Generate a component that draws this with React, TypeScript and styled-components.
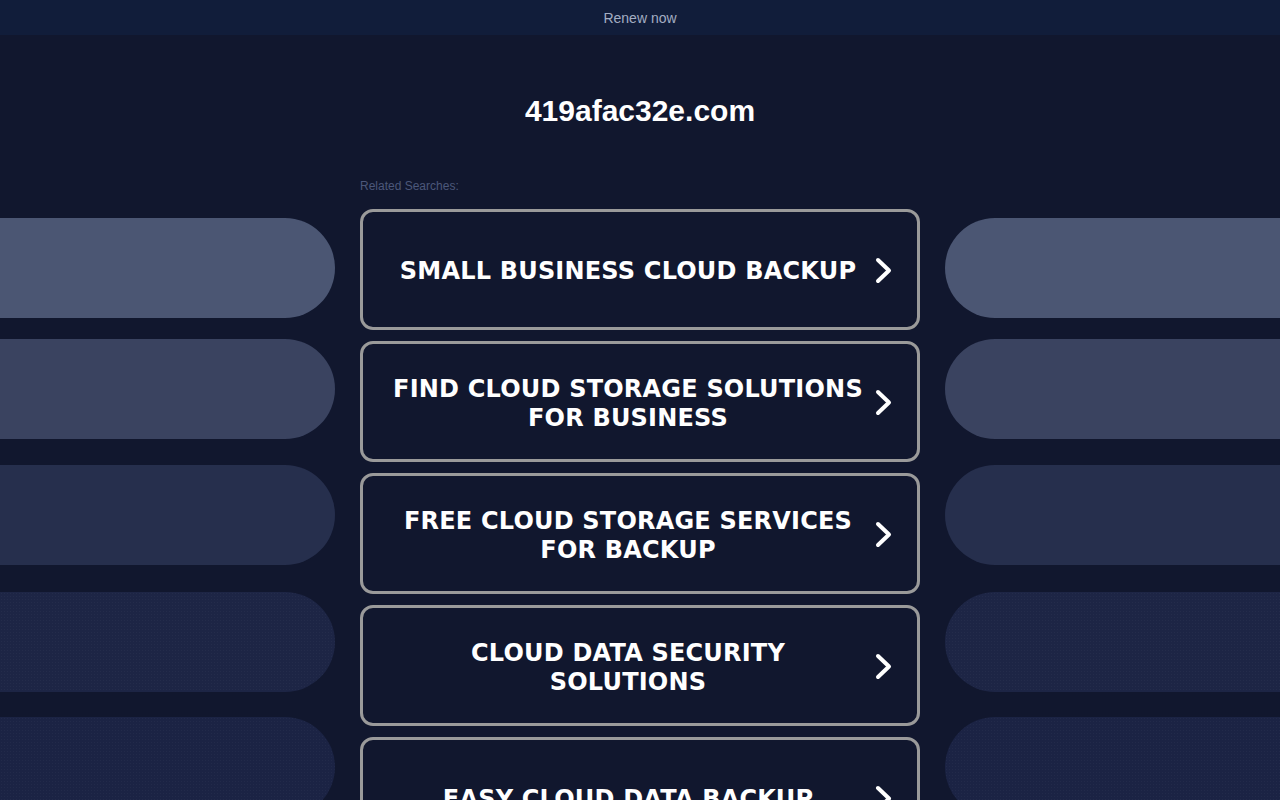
import React from "react";
import styled, { createGlobalStyle, css } from "styled-components";

const GlobalStyle = createGlobalStyle`
  html, body {
    margin: 0;
    padding: 0;
    background: #11172e;
    overflow: hidden;
  }
  * { box-sizing: border-box; }
`;

const Page = styled.div`
  width: 1280px;
  height: 800px;
  overflow: hidden;
  background: #11172e;
  font-family: "Liberation Sans", Arial, sans-serif;
`;

const TopBar = styled.div`
  height: 35px;
  background: #111d3a;
  display: flex;
  align-items: center;
  justify-content: center;
`;

const RenewLink = styled.a`
  color: #a3adc2;
  font-size: 14px;
  text-decoration: none;
  line-height: 16px;
  margin-top: 1px;
`;

const Title = styled.h1`
  margin: 58px 0 0;
  height: 36px;
  line-height: 36px;
  text-align: center;
  color: #ffffff;
  font-size: 30px;
  font-weight: 700;
  font-family: "Liberation Sans", Arial, sans-serif;
`;

const Main = styled.div`
  display: grid;
  grid-template-columns: 1fr 560px 1fr;
  column-gap: 25px;
  margin-top: 49px;
`;

const SideColumn = styled.div`
  display: flex;
  flex-direction: column;
  padding-top: 40px;
`;

const Pill = styled.div<{ $side: "left" | "right"; $color: string; $gap: number; $dots: boolean }>`
  height: 100px;
  flex: none;
  margin-top: ${(p) => p.$gap}px;
  background-color: ${(p) => p.$color};
  ${(p) =>
    p.$dots &&
    css`
      background-image: radial-gradient(rgba(255, 255, 255, 0.03) 0.6px, transparent 0.8px);
      background-size: 3px 3px;
    `}
  border-radius: ${(p) => (p.$side === "left" ? "0 50px 50px 0" : "50px 0 0 50px")};
`;

const Center = styled.div`
  display: flex;
  flex-direction: column;
`;

const RelatedLabel = styled.div`
  color: #4c577a;
  font-size: 12px;
  line-height: 14px;
  height: 14px;
  padding-top: 1px;
  margin-bottom: 17px;
`;

const ButtonList = styled.div`
  display: flex;
  flex-direction: column;
  gap: 11px;
`;

const SearchButton = styled.a`
  display: flex;
  align-items: center;
  min-height: 121px;
  padding: 0 25px 0 27px;
  border: 3px solid #9a9a9a;
  border-radius: 13px;
  background: #11172e;
  text-decoration: none;
  cursor: pointer;
`;

const ButtonText = styled.span`
  width: 476px;
  flex: none;
  padding-top: 4px;
  text-align: center;
  color: #ffffff;
  font-family: "DejaVu Sans", Verdana, Tahoma, sans-serif;
  font-weight: 700;
  font-size: 24px;
  line-height: 29px;
  letter-spacing: 0.2px;
  text-transform: uppercase;
`;

const Chevron = styled.svg`
  flex: none;
  width: 28px;
  height: 28px;
  margin-left: auto;
`;

const pills = [
  { color: "#4b5673", gap: 0, dots: false },
  { color: "#3a4360", gap: 21, dots: false },
  { color: "#262f4d", gap: 26, dots: false },
  { color: "#1d2545", gap: 27, dots: true },
  { color: "#1b2344", gap: 25, dots: true },
];

const searches = [
  "Small Business Cloud Backup",
  "Find Cloud Storage Solutions for Business",
  "Free Cloud Storage Services for Backup",
  "Cloud Data Security Solutions",
  "Easy Cloud Data Backup",
];

const ChevronIcon = () => (
  <Chevron viewBox="0 0 28 28" aria-hidden="true">
    <path
      d="M12 4 L23 14.5 L12 25"
      fill="none"
      stroke="#ffffff"
      strokeWidth="4"
      strokeLinecap="round"
      strokeLinejoin="round"
    />
  </Chevron>
);

export default function App() {
  return (
    <Page>
      <GlobalStyle />
      <TopBar>
        <RenewLink href="#">Renew now</RenewLink>
      </TopBar>
      <Title>419afac32e.com</Title>
      <Main>
        <SideColumn>
          {pills.map((p, i) => (
            <Pill key={i} $side="left" $color={p.color} $gap={p.gap} $dots={p.dots} />
          ))}
        </SideColumn>
        <Center>
          <RelatedLabel>Related Searches:</RelatedLabel>
          <ButtonList>
            {searches.map((s) => (
              <SearchButton key={s} href="#">
                <ButtonText>{s}</ButtonText>
                <ChevronIcon />
              </SearchButton>
            ))}
          </ButtonList>
        </Center>
        <SideColumn>
          {pills.map((p, i) => (
            <Pill key={i} $side="right" $color={p.color} $gap={p.gap} $dots={p.dots} />
          ))}
        </SideColumn>
      </Main>
    </Page>
  );
}
